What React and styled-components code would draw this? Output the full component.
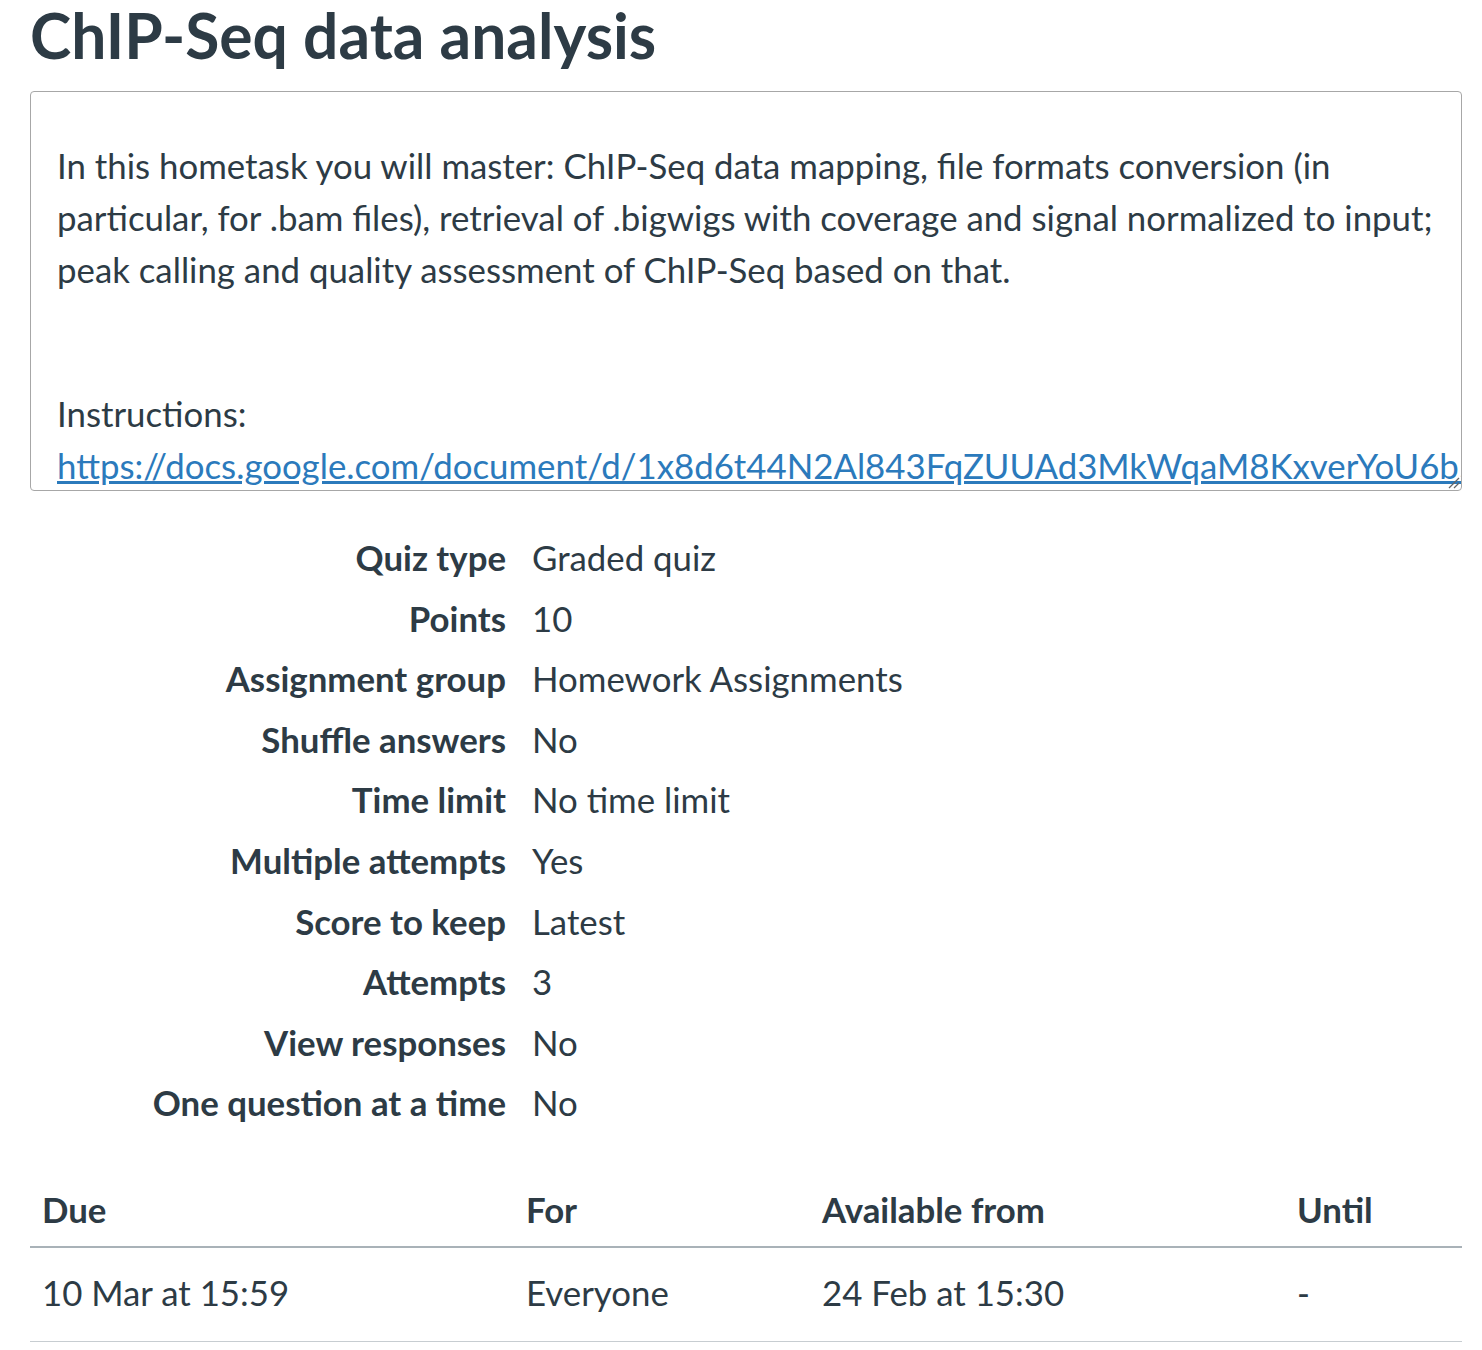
import React from "react";
import styled, { createGlobalStyle } from "styled-components";

const GlobalStyle = createGlobalStyle`
  html, body {
    margin: 0;
    padding: 0;
    background: #ffffff;
  }
  body {
    font-family: Lato, "Noto Sans", sans-serif;
    color: #2d3b45;
  }
`;

const StyledPage = styled.div`
  padding: 0 20px 0 30px;
  width: 1432px;
`;

const StyledTitle = styled.h1`
  margin: 0;
  font-size: 62.3px;
  font-weight: 700;
  line-height: 70px;
  color: #2d3b45;
`;

const StyledDescription = styled.div`
  position: relative;
  box-sizing: border-box;
  margin-top: 21px;
  height: 400px;
  border: 1px solid #a7a7a7;
  border-radius: 4px;
  padding: 28px 26px;
  overflow: hidden;
  font-size: 34.8px;
  line-height: 52px;

  p {
    margin: 20px 0;
  }
`;

const StyledLink = styled.a`
  color: #2b7abc;
  text-decoration: underline;
  white-space: nowrap;
`;

const StyledGrip = styled.svg`
  position: absolute;
  right: 1px;
  bottom: 1px;
`;

const StyledDetails = styled.dl`
  display: grid;
  grid-template-columns: 476px 1fr;
  column-gap: 26px;
  margin: 37px 0 0;
  font-size: 34.8px;
  line-height: 60.6px;
`;

const StyledLabel = styled.dt`
  text-align: right;
  font-weight: 700;
`;

const StyledValue = styled.dd`
  margin: 0;
`;

const StyledTable = styled.div`
  margin-top: 42px;
  font-size: 34.8px;
`;

const StyledRow = styled.div`
  display: grid;
  grid-template-columns: 484px 296px 475px 1fr;
  border-bottom: ${(p) => (p.$head ? "2px solid #a9b2b8" : "1px solid #c7cdd1")};
  font-weight: ${(p) => (p.$head ? 700 : 400)};
  padding: ${(p) => (p.$head ? "14px 0 16px" : "25px 0 28px")};
  line-height: 40px;
`;

const StyledCell = styled.div`
  padding: 0 12px;
`;

const details = [
  ["Quiz type", "Graded quiz"],
  ["Points", "10"],
  ["Assignment group", "Homework Assignments"],
  ["Shuffle answers", "No"],
  ["Time limit", "No time limit"],
  ["Multiple attempts", "Yes"],
  ["Score to keep", "Latest"],
  ["Attempts", "3"],
  ["View responses", "No"],
  ["One question at a time", "No"],
];

const url =
  "https://docs.google.com/document/d/1x8d6t44N2Al843FqZUUAd3MkWqaM8KxverYoU6b5iXg/edit?usp=sharing";

const App = () => {
  return (
    <StyledPage>
      <GlobalStyle />
      <StyledTitle>ChIP-Seq data analysis</StyledTitle>
      <StyledDescription>
        <p>
          In this hometask you will master: ChIP-Seq data mapping, file formats
          conversion (in particular, for .bam files), retrieval of .bigwigs with
          coverage and signal normalized to input; peak calling and quality
          assessment of ChIP-Seq based on that.
        </p>
        <p>&nbsp;</p>
        <p>
          Instructions:
          <br />
          <StyledLink href={url}>{url}</StyledLink>
        </p>
        <StyledGrip width="14" height="14" viewBox="0 0 14 14">
          <path d="M13 3 L3 13 M13 8 L8 13" stroke="#666" strokeWidth="1.3" />
        </StyledGrip>
      </StyledDescription>
      <StyledDetails>
        {details.map(([label, value]) => (
          <React.Fragment key={label}>
            <StyledLabel>{label}</StyledLabel>
            <StyledValue>{value}</StyledValue>
          </React.Fragment>
        ))}
      </StyledDetails>
      <StyledTable>
        <StyledRow $head>
          <StyledCell>Due</StyledCell>
          <StyledCell>For</StyledCell>
          <StyledCell>Available from</StyledCell>
          <StyledCell>Until</StyledCell>
        </StyledRow>
        <StyledRow>
          <StyledCell>10 Mar at 15:59</StyledCell>
          <StyledCell>Everyone</StyledCell>
          <StyledCell>24 Feb at 15:30</StyledCell>
          <StyledCell>-</StyledCell>
        </StyledRow>
      </StyledTable>
    </StyledPage>
  );
};

export default App;
